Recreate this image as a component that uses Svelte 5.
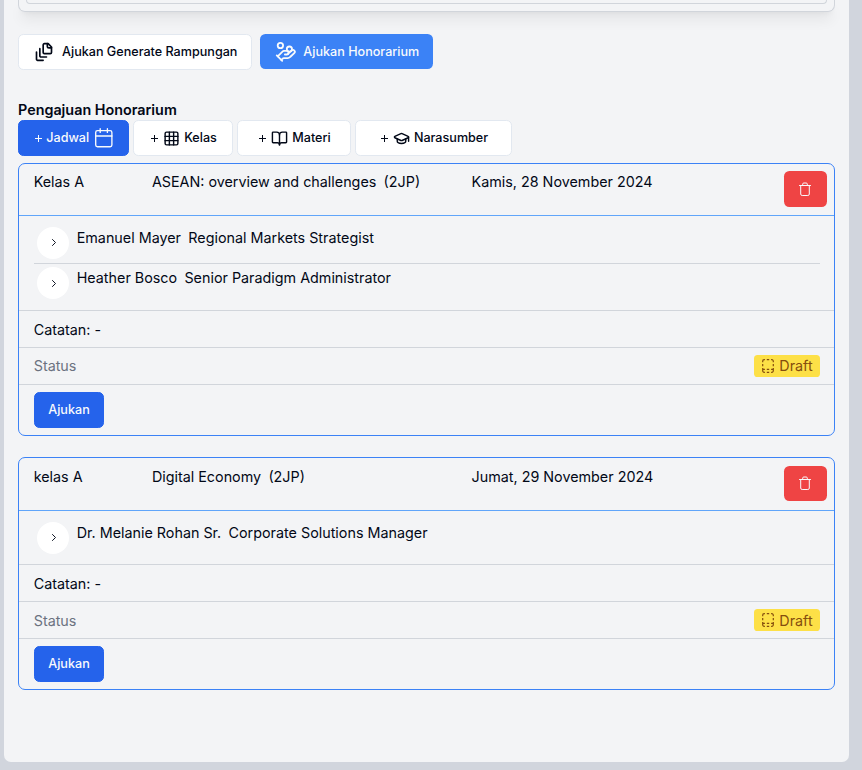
<script>
  const cards = [
    {
      kelas: 'Kelas A', materi: 'ASEAN: overview and challenges', jp: '(2JP)', tanggal: 'Kamis, 28 November 2024',
      people: [
        { name: 'Emanuel Mayer', role: 'Regional Markets Strategist' },
        { name: 'Heather Bosco', role: 'Senior Paradigm Administrator' }
      ]
    },
    {
      kelas: 'kelas A', materi: 'Digital Economy', jp: '(2JP)', tanggal: 'Jumat, 29 November 2024',
      people: [{ name: 'Dr. Melanie Rohan Sr.', role: 'Corporate Solutions Manager' }]
    }
  ];
</script>

{#snippet plus()}
  <svg class="plus" width="8" height="9" viewBox="0 0 8 9"><path d="M4.5 1v7M1 4.5h7" /></svg>
{/snippet}

<div class="page">
  <main>
    <div class="upper"><div class="inner"></div></div>

    <div class="tabs">
      <button class="btn generate">
        <svg class="line" width="20" height="20" viewBox="0 0 24 24"><path d="M21 7h-3a2 2 0 0 1-2-2V2" /><path d="M21 6v6.5c0 .8-.7 1.5-1.5 1.5h-7c-.8 0-1.5-.7-1.5-1.5v-9c0-.8.7-1.5 1.5-1.5H17Z" /><path d="M7 8v8.8c0 .3.2.6.4.8.2.2.5.4.8.4H15" /><path d="M3 12v8.8c0 .3.2.6.4.8.2.2.5.4.8.4H11" /></svg>
        <span>Ajukan Generate Rampungan</span>
      </button>
      <button class="btn honor">
        <svg class="line" width="21.6" height="21.6" viewBox="0 0 24 24"><path d="M11 15h2a2 2 0 1 0 0-4h-3c-.6 0-1.1.2-1.4.6L3 17" /><path d="m7 21 1.6-1.4c.3-.4.8-.6 1.4-.6h4c1.1 0 2.1-.4 2.8-1.2l4.6-4.4a2 2 0 0 0-2.75-2.91l-4.2 3.9" /><path d="m2 16 6 6" /><circle cx="16" cy="9" r="2.9" /><circle cx="6" cy="5" r="3" /></svg>
        <span>Ajukan Honorarium</span>
      </button>
    </div>

    <h2>Pengajuan Honorarium</h2>
    <div class="tools">
      <button class="btn primary jadwal">{@render plus()}<span>Jadwal</span>
        <svg class="line thin" width="21.6" height="21.6" viewBox="0 0 24 24"><path d="M8 2v4M16 2v4M3 10h18" /><rect width="18" height="18" x="3" y="4" rx="2" /></svg>
      </button>
      <button class="btn kelas">{@render plus()}
        <svg class="line" width="17" height="17" viewBox="0 0 24 24"><rect width="18" height="18" x="3" y="3" rx="2" /><path d="M3 9h18M3 15h18M9 3v18M15 3v18" /></svg><span>Kelas</span>
      </button>
      <button class="btn materi">{@render plus()}
        <svg class="line" width="17" height="17" viewBox="0 0 24 24"><path d="M12 7v14" /><path d="M3 18a1 1 0 0 1-1-1V4a1 1 0 0 1 1-1h5a4 4 0 0 1 4 4 4 4 0 0 1 4-4h5a1 1 0 0 1 1 1v13a1 1 0 0 1-1 1h-6a3 3 0 0 0-3 3 3 3 0 0 0-3-3z" /></svg><span>Materi</span>
      </button>
      <button class="btn nara">{@render plus()}
        <svg class="line" width="17" height="17" viewBox="0 0 24 24"><path d="M21.42 10.922a1 1 0 0 0-.019-1.838L12.83 5.18a2 2 0 0 0-1.66 0L2.6 9.08a1 1 0 0 0 0 1.832l8.57 3.908a2 2 0 0 0 1.66 0z" /><path d="M22 10v6" /><path d="M6 12.5V16a6 3 0 0 0 12 0v-3.5" /></svg><span>Narasumber</span>
      </button>
    </div>

    {#each cards as card}
      <section class="card">
        <header>
          <span class="c1">{card.kelas}</span>
          <span class="c2">{card.materi}<span class="gap">{card.jp}</span></span>
          <span class="c3">{card.tanggal}</span>
          <button class="trash" aria-label="Hapus">
            <svg width="14" height="16" viewBox="0 0 14 16" fill="none" stroke="currentColor" stroke-linecap="round" stroke-linejoin="round"><path d="M1.5 4.5h11" stroke-width="1.1" /><path d="M4.7 4.2V3.1a1.1 1.1 0 0 1 1.1-1.1h2.4a1.1 1.1 0 0 1 1.1 1.1v1.1M2.7 4.8v8.2a1.5 1.5 0 0 0 1.5 1.5h5.6a1.5 1.5 0 0 0 1.5-1.5V4.8" /></svg>
          </button>
        </header>
        <div class="people" class:single={card.people.length === 1}>
          {#each card.people as p}
            <div class="person">
              <button class="circle" aria-label="Detail"><svg width="6" height="9" viewBox="0 0 6 9"><path d="M1.2 1.2 4.5 4.5 1.2 7.8" fill="none" stroke="currentColor" stroke-width=".95" /></svg></button>
              <p>{p.name}<span class="gap">{p.role}</span></p>
            </div>
          {/each}
        </div>
        <div class="row note">Catatan: -</div>
        <div class="row status"><span class="muted">Status</span>
          <span class="badge"><svg width="14" height="16" viewBox="0 0 14 16" fill="none" stroke="currentColor" stroke-width="1.2"><path d="M1.7 4.2V3.2a1.5 1.5 0 0 1 1.5-1.5h.7M5.8 1.7h2.4M10.1 1.7h.7a1.5 1.5 0 0 1 1.5 1.5v1M12.3 6v2.2M1.7 6v2.2M1.7 10v2.8a1.5 1.5 0 0 0 1.5 1.5h.7M5.8 14.3h2.4M10.1 14.3h.7a1.5 1.5 0 0 0 1.5-1.5V10M2 11.3h1.9M5.8 11.3h2.4M10.1 11.3h1.9" /></svg><span class="label">Draft</span></span>
        </div>
        <footer><button class="btn primary">Ajukan</button></footer>
      </section>
    {/each}
  </main>
</div>

<style>
  :global(body) { background: #d1d5db; }
  .page { height: 770px; box-sizing: border-box; padding: 0 13px 8px 4px; background: #d1d5dd; overflow: hidden; font: 14.4px/21.6px Inter, sans-serif; color: #020817; }
  main { height: 762px; box-sizing: border-box; padding: 0 14px; background: #f3f4f6; border-radius: 0 0 7px 7px; overflow: hidden; }
  button { font: inherit; margin: 0; padding: 0; border: 0; color: inherit; }
  .upper { height: 12px; box-sizing: border-box; width: 817px; border: 1px solid #d1d5db; border-top: 0; border-radius: 0 0 7px 7px; padding: 0 7px; box-shadow: 0 9px 14px -3px #0000001c, 0 4px 6px -4px #0000001c; }
  .inner { height: 4px; box-sizing: border-box; border: 1px solid #d1d5db; border-top: 0; border-radius: 0 0 4px 4px; }
  .line { fill: none; stroke: currentColor; stroke-width: 2; stroke-linecap: round; stroke-linejoin: round; flex: none; }
  .thin { stroke-width: 1.5; }
  .btn { height: 36px; box-sizing: border-box; display: flex; align-items: center; justify-content: center; background: #fff; border: 1px solid #e2e8f0; border-radius: 5.4px; font-size: 12.6px; line-height: 18px; font-weight: 500; white-space: nowrap; }
  .tabs { display: flex; height: 36px; gap: 8px; margin-top: 22px; }
  .generate { width: 234px; gap: 8px; padding-left: 1.5px; }
  .honor { width: 173px; height: 35px; gap: 7px; padding-left: 1px; background: #3b82f6; color: #f8fafc; border: 0; }
  h2 { margin: 29px 0 0; font-size: 14.35px; line-height: 21px; font-weight: 600; }
  .tools { display: flex; gap: 4px; }
  .tools .btn { gap: 4px; padding-left: 1px; }
  .tools .plus { margin-right: 1px; }
  .tools .jadwal { gap: 3.5px; padding-left: 1px; }
  .plus { fill: none; stroke: currentColor; stroke-width: 1; flex: none; }
  .primary { background: #2563eb; color: #f8fafc; border-color: #2563eb; }
  .jadwal { width: 111px; }
  .kelas { width: 100px; }
  .materi { width: 114px; }
  .nara { width: 157px; }
  .card { width: 817px; box-sizing: border-box; border: 1px solid #3b82f6; border-radius: 7px; margin-top: 7px; font-size: 14.33px; }
  .card + .card { margin-top: 21px; }
  header { height: 52px; box-sizing: border-box; border-bottom: 1px solid #60a5fa; display: flex; padding: 7px 7px 0 14.7px; }
  .card + .card header { height: 53px; padding-top: 8px; }
  .c1 { width: 118.2px; }
  .c2 { width: 319.7px; }
  .c3 { flex: 1; }
  .gap { margin-left: 7.3px; }
  .trash { width: 43px; height: 36px; box-sizing: border-box; padding-right: 1px; border-radius: 5.4px; background: #ef4444; color: #f8fafc; display: flex; align-items: center; justify-content: center; }
  .card + .card .trash { height: 35px; padding-bottom: 1px; }
  .people { height: 95px; box-sizing: border-box; border-bottom: 1px solid #d1d5db; padding: 7px 14px 0 15px; }
  .single { height: 54px; }
  .person { height: 40px; box-sizing: border-box; display: flex; padding: 4px 0 0 3px; }
  .person + .person { border-top: 1px solid #d1d5db; padding-top: 3px; }
  .circle { width: 32px; height: 32px; box-sizing: border-box; padding-left: 1px; border-radius: 50%; background: #fff; display: flex; align-items: center; justify-content: center; }
  .person:first-child .circle { padding-bottom: 1px; }
  p { margin: 0 0 0 7.7px; }
  .row { height: 37px; box-sizing: border-box; border-bottom: 1px solid #d1d5db; display: flex; align-items: center; justify-content: space-between; padding: 0 14px 0 14.7px; }
  .note { padding-top: 2px; }
  .muted { color: #6b7280; }
  .card + .card .muted { padding-top: 2px; }
  .card + .card .label { padding-top: 1px; }
  .badge { display: flex; align-items: center; gap: 4.3px; width: 66px; height: 22px; box-sizing: border-box; padding-left: 7px; background: #fde047; color: #854d0e; border-radius: 3.6px; }
  footer { height: 50px; box-sizing: border-box; padding: 7px 15px; }
  footer .btn { width: 70px; }
</style>
